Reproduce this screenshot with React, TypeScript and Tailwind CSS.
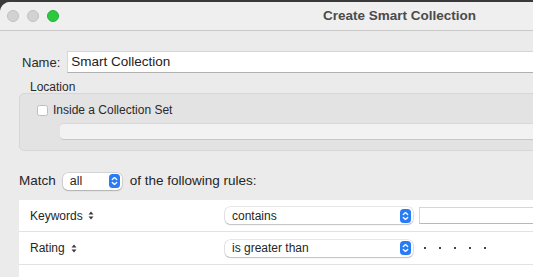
import React from "react";

function Stepper() {
  return (
    <svg width="11" height="14" viewBox="0 0 11 14" className="shrink-0">
      <rect x="0" y="0" width="11" height="14" rx="3.5" fill="#2a7cf6" />
      <polyline points="3.3,5.6 5.5,3.6 7.7,5.6" fill="none" stroke="#fff" strokeWidth="1.3" strokeLinecap="round" strokeLinejoin="round" />
      <polyline points="3.3,8.4 5.5,10.4 7.7,8.4" fill="none" stroke="#fff" strokeWidth="1.3" strokeLinecap="round" strokeLinejoin="round" />
    </svg>
  );
}

function SortArrows() {
  return (
    <svg width="6" height="9" viewBox="0 0 6 9" className="shrink-0">
      <polygon points="0.5,3.5 3,0.5 5.5,3.5" fill="#3a3a3a" />
      <polygon points="0.5,5.5 3,8.5 5.5,5.5" fill="#3a3a3a" />
    </svg>
  );
}

function Popup({ label, width, text }: { label: string; width: string; text: string }) {
  return (
    <div
      className={`${width} h-[17px] flex items-center justify-between pl-[7px] pr-[2px] bg-white rounded-[5px] shadow-[0_0_0_0.5px_rgba(0,0,0,0.18),0_1px_1.5px_rgba(0,0,0,0.18)] ${text} text-[#262626]`}
    >
      <span className="leading-none">{label}</span>
      <Stepper />
    </div>
  );
}

export default function App() {
  return (
    <div
      className="w-[533px] h-[277px] overflow-hidden bg-[#3a3a3a] pt-[2px]"
      style={{ fontFamily: '"Liberation Sans", Arial, sans-serif' }}
    >
      <div className="w-[800px] h-[275px] rounded-tl-[10px] bg-[#ebebeb] overflow-hidden">
        {/* Title bar */}
        <div className="h-[29px] flex items-center bg-[#efefef] border-b border-[#c9c9c9] pl-[7px]">
          <div className="flex gap-[8px]">
            <div className="w-[12px] h-[12px] rounded-full bg-[#d2d2d2] border border-[#c0c0c0]" />
            <div className="w-[12px] h-[12px] rounded-full bg-[#d2d2d2] border border-[#c0c0c0]" />
            <div className="w-[12px] h-[12px] rounded-full bg-[#2bc840] border border-[#24b13a]" />
          </div>
          <div className="ml-[264px] text-[13.5px] font-bold text-[#4b4b4b] leading-none">
            Create Smart Collection
          </div>
        </div>

        {/* Name */}
        <div className="mt-[20px] flex items-center h-[22px] pl-[22px]">
          <span className="text-[13px] text-[#2a2a2a] leading-none">Name:</span>
          <div className="ml-[7px] w-[700px] h-[22px] bg-white border border-[#d6d6d6] border-b-[#b0b0b0] flex items-center pl-[3px] text-[13.5px] text-[#222] leading-none">
            Smart Collection
          </div>
        </div>

        {/* Location */}
        <div className="mt-[6px] h-[14px] pl-[30px] pt-[2px] flex items-center text-[12px] text-[#2a2a2a] leading-none">
          Location
        </div>
        <div className="ml-[19px] w-[760px] h-[58px] bg-[#e3e3e3] border border-[#d6d6d6] rounded-[5px] pl-[17px] pt-[9px]">
          <div className="flex items-center h-[14px]">
            <div className="w-[11px] h-[11px] bg-white border border-[#bdbdbd] rounded-[2.5px]" />
            <span className="ml-[5px] text-[12px] text-[#2a2a2a] leading-none">Inside a Collection Set</span>
          </div>
          <div className="mt-[6px] ml-[23px] w-[700px] h-[17px] bg-[#f2f2f2] border-t border-[#d8d8d8] border-b border-b-[#c6c6c6] rounded-[4px]" />
        </div>

        {/* Match */}
        <div className="mt-[21px] h-[18px] pl-[19px] flex items-center">
          <span className="text-[13.5px] text-[#262626] leading-none">Match</span>
          <div className="ml-[7px]">
            <Popup label="all" width="w-[59px]" text="text-[12.5px]" />
          </div>
          <span className="ml-[8px] text-[13.5px] text-[#262626] leading-none">of the following rules:</span>
        </div>

        {/* Rules */}
        <div className="mt-[10px] ml-[19px] w-[800px] h-[100px] bg-white">
          <div className="h-[32px] flex items-center border-b border-[#e2e2e2]">
            <div className="w-[206px] pl-[11px] flex items-center">
              <span className="text-[12px] text-[#262626] leading-none">Keywords</span>
              <span className="ml-[5px]"><SortArrows /></span>
            </div>
            <Popup label="contains" width="w-[188px]" text="text-[12px]" />
            <div className="ml-[6px] w-[300px] h-[17px] bg-white border border-[#d6d6d6] border-b-[#b8b8b8]" />
          </div>
          <div className="h-[33px] flex items-center border-b border-[#e2e2e2]">
            <div className="w-[206px] pl-[11px] flex items-center">
              <span className="text-[12px] text-[#262626] leading-none">Rating</span>
              <span className="ml-[6px]"><SortArrows /></span>
            </div>
            <Popup label="is greater than" width="w-[188px]" text="text-[12px]" />
            <div className="ml-[11px] flex gap-[13px]">
              <div className="w-[2px] h-[2px] bg-[#444]" />
              <div className="w-[2px] h-[2px] bg-[#444]" />
              <div className="w-[2px] h-[2px] bg-[#444]" />
              <div className="w-[2px] h-[2px] bg-[#444]" />
              <div className="w-[2px] h-[2px] bg-[#444]" />
            </div>
          </div>
        </div>
      </div>
    </div>
  );
}
